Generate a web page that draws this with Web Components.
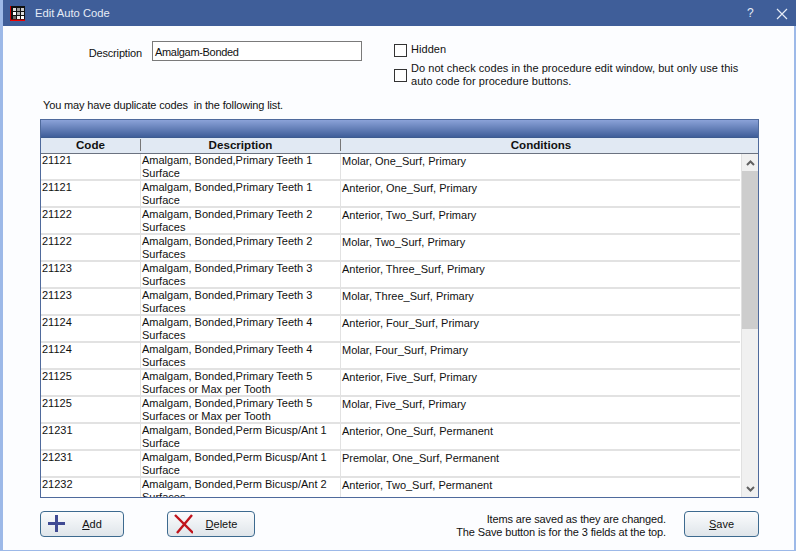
<!DOCTYPE html>
<html><head><meta charset="utf-8"><style>
html,body{margin:0;padding:0;background:#fcfdff}
body{font:11px/13px "Liberation Sans",sans-serif;color:#111}
</style></head><body>
<template id="t-win"><style>
:host{display:flex;flex-direction:column;width:796px;height:551px;box-sizing:border-box;border:solid #9db9e8;border-width:0 2px 1px 3px;background:#fcfdff}
.bar{height:26px;flex:none;margin:0 -2px 0 0;background:#3f5e99;color:#e6ecf6;display:flex;align-items:center;font-size:11.2px}
.ic{margin:0 10px 0 7px;display:flex}
.t{flex:1;margin-top:1px}
.q{width:13px;margin-right:16px;font-size:12px}
.x{margin-right:8px;display:flex;margin-top:2px}
.body{flex:1;min-height:0;display:flex;flex-direction:column}
</style><div class="bar"><span class="ic"><slot name="icon"></slot></span><span class="t"><slot name="title"></slot></span><span class="q">?</span><span class="x"><svg width="12" height="12" viewBox="0 0 12 12"><path d="M1 1L11 11M11 1L1 11" stroke="#e6ecf6" stroke-width="1.2" fill="none"/></svg></span></div><div class="body"><slot></slot></div></template>

<template id="t-field"><style>
:host{display:flex;align-items:flex-start}
.l{width:139px;text-align:right;padding-top:6px;flex:none;box-sizing:border-box;letter-spacing:-.15px}
.i{margin-left:10px;width:210px;height:20px;box-sizing:border-box;border:1px solid #7a7a7a;background:#fff;padding:4px 0 0 2px;white-space:nowrap;letter-spacing:-.32px}
</style><span class="l"><slot name="label"></slot></span><span class="i"><slot></slot></span></template>

<template id="t-check"><style>
:host{display:flex;align-items:center;gap:4px}
.b{width:13px;height:13px;box-sizing:border-box;border:1px solid #333;background:#fff;flex:none;margin-top:1px}
</style><span class="b"></span><span><slot></slot></span></template>

<template id="t-grid"><style>
:host{display:flex;flex-direction:column;height:379px;margin:0 35px 0 37px;box-sizing:border-box;border:1px solid #4f6a9c;flex:none;background:#fff;overflow:hidden}
.cap{height:18px;flex:none;background:linear-gradient(#8ba2d8,#3f5e99);border-bottom:1px solid #3d5b8f;box-sizing:border-box}
.hdr{height:16px;flex:none;display:grid;grid-template-columns:100px 200px 400px;background:#e1e9f3;border-bottom:1px solid #6b7280;box-sizing:border-box;font-weight:bold;font-size:11.6px;text-align:center}
.hdr span{border-right:1px solid #777;height:12px;margin-top:1px;line-height:12px}
.hdr span:last-child{border:0}
.main{flex:1;display:flex;min-height:0}
.rows{flex:1;overflow:hidden;min-width:0}
.sb{width:17px;flex:none;background:#f0f0f0;display:flex;flex-direction:column;align-items:center;margin-left:1px;border-left:1px solid #e0e0e0;box-sizing:border-box}
.a{height:17px;flex:none;display:flex;align-items:center;justify-content:center;width:100%}
.sp{flex:1;width:100%;min-height:0}
.th{height:158px;background:#cdcdcd;width:100%}
</style><div class="cap"></div><div class="hdr"><span>Code</span><span>Description</span><span>Conditions</span></div><div class="main"><div class="rows"><slot></slot></div><div class="sb"><div class="a"><svg width="9" height="6" viewBox="0 0 9 6"><path d="M1 5L4.5 1.5L8 5" stroke="#606060" stroke-width="2" fill="none"/></svg></div><div class="sp"><div class="th"></div></div><div class="a"><svg width="9" height="6" viewBox="0 0 9 6"><path d="M1 1L4.5 4.5L8 1" stroke="#606060" stroke-width="2" fill="none"/></svg></div></div></div></template>

<template id="t-row"><style>
:host{display:grid;grid-template-columns:100px 200px 1fr;height:27px;box-sizing:border-box;border-bottom:2px solid #e2e2e2}
.c{padding:0 0 0 1px;border-right:1px solid #e2e2e2;box-sizing:border-box;line-height:12.5px;height:25px}
.c:last-child{border:0;padding-top:1px}
</style><div class="c" id="a"></div><div class="c" id="b"></div><div class="c" id="d"></div></template>

<template id="t-btn"><style>
:host{display:flex;align-items:center;box-sizing:border-box;height:26px;border:1px solid #3d6a8f;border-radius:4px;background:linear-gradient(#fbfcfd,#dfe5ea);position:relative;flex:none}
.ic{position:absolute;left:5px;top:2px;display:flex}
.t{flex:1;text-align:center;padding-top:1px}
</style><span class="ic"><slot name="icon"></slot></span><span class="t"><slot></slot></span></template>

<template id="t-foot"><style>
:host{display:flex;align-items:flex-start;margin:13px 35px 0 37px;flex:none}
.n{margin-left:auto;margin-right:18px;text-align:right;letter-spacing:-.13px;padding-top:2px}
</style><slot name="left"></slot><span class="n"><slot name="note"></slot></span><slot name="right"></slot></template>

<script>
function def(name,tid,extra){customElements.define(name,class extends HTMLElement{constructor(){super();this.attachShadow({mode:'open'}).appendChild(document.getElementById(tid).content.cloneNode(true));}connectedCallback(){if(extra)extra.call(this);}});}
def('x-window','t-win');def('x-field','t-field');def('x-check','t-check');def('x-grid','t-grid');def('x-btn','t-btn');def('x-foot','t-foot');
def('x-row','t-row',function(){const s=this.shadowRoot;s.getElementById('a').textContent=this.getAttribute('code');s.getElementById('b').textContent=this.getAttribute('desc');s.getElementById('d').textContent=this.getAttribute('cond');});
</script>

<x-window>
<svg slot="icon" width="15" height="15" viewBox="0 0 15 15" style="display:block"><rect width="15" height="15" fill="#111"/><rect y="13.6" width="15" height="1.4" fill="#e00"/><rect width="1" height="15" fill="#c00"/><rect x="3" y="2" width="3" height="3" fill="#ddd"/><rect x="7" y="2" width="3" height="3" fill="#999"/><rect x="11" y="2" width="3" height="3" fill="#ccc"/><rect x="3" y="6" width="3" height="3" fill="#fff"/><rect x="7" y="6" width="3" height="3" fill="#aaa"/><rect x="11" y="6" width="3" height="3" fill="#ddd"/><rect x="3" y="10" width="3" height="3" fill="#666"/><rect x="7" y="10" width="3" height="3" fill="#eee"/><rect x="11" y="10" width="3" height="3" fill="#fff"/></svg>
<span slot="title">Edit Auto Code</span>

<div style="display:flex;height:68px;flex:none;padding-top:15px;box-sizing:border-box">
<x-field style="width:359px"><span slot="label">Description</span>Amalgam-Bonded</x-field>
<div style="margin-left:32px;display:flex;flex-direction:column;gap:5px;padding-top:1px;letter-spacing:.04px">
<x-check style="height:15px">Hidden</x-check>
<x-check style="line-height:12.5px">Do not check codes in the procedure edit window, but only use this<br>auto code for procedure buttons.</x-check>
</div></div>
<div style="height:17px;padding:6px 0 0 40px;box-sizing:border-box;flex:none;line-height:11px;margin-bottom:8px;letter-spacing:-.14px">You may have duplicate codes&nbsp; in the following list.</div>

<x-grid>
<x-row code="21121" desc="Amalgam, Bonded,Primary Teeth 1 Surface" cond="Molar, One_Surf, Primary"></x-row>
<x-row code="21121" desc="Amalgam, Bonded,Primary Teeth 1 Surface" cond="Anterior, One_Surf, Primary"></x-row>
<x-row code="21122" desc="Amalgam, Bonded,Primary Teeth 2 Surfaces" cond="Anterior, Two_Surf, Primary"></x-row>
<x-row code="21122" desc="Amalgam, Bonded,Primary Teeth 2 Surfaces" cond="Molar, Two_Surf, Primary"></x-row>
<x-row code="21123" desc="Amalgam, Bonded,Primary Teeth 3 Surfaces" cond="Anterior, Three_Surf, Primary"></x-row>
<x-row code="21123" desc="Amalgam, Bonded,Primary Teeth 3 Surfaces" cond="Molar, Three_Surf, Primary"></x-row>
<x-row code="21124" desc="Amalgam, Bonded,Primary Teeth 4 Surfaces" cond="Anterior, Four_Surf, Primary"></x-row>
<x-row code="21124" desc="Amalgam, Bonded,Primary Teeth 4 Surfaces" cond="Molar, Four_Surf, Primary"></x-row>
<x-row code="21125" desc="Amalgam, Bonded,Primary Teeth 5 Surfaces or Max per Tooth" cond="Anterior, Five_Surf, Primary"></x-row>
<x-row code="21125" desc="Amalgam, Bonded,Primary Teeth 5 Surfaces or Max per Tooth" cond="Molar, Five_Surf, Primary"></x-row>
<x-row code="21231" desc="Amalgam, Bonded,Perm Bicusp/Ant 1 Surface" cond="Anterior, One_Surf, Permanent"></x-row>
<x-row code="21231" desc="Amalgam, Bonded,Perm Bicusp/Ant 1 Surface" cond="Premolar, One_Surf, Permanent"></x-row>
<x-row code="21232" desc="Amalgam, Bonded,Perm Bicusp/Ant 2 Surfaces" cond="Anterior, Two_Surf, Permanent"></x-row>
</x-grid>

<x-foot>
<div slot="left" style="display:flex;gap:43px">
<x-btn style="width:84px"><svg slot="icon" width="20" height="20" viewBox="0 0 20 20"><path d="M9 1h3v7h7v3h-7v7H9v-7H2V8h7z" fill="#3f4a93"/></svg><span style="padding-left:20px"><u>A</u>dd</span></x-btn>
<x-btn style="width:88px"><svg slot="icon" width="20" height="20" viewBox="0 0 20 20"><path d="M2 1L20 19M19 1L4 19" stroke="#c0141c" stroke-width="2.4" fill="none"/></svg><span style="padding-left:21px"><u>D</u>elete</span></x-btn>
</div>
<span slot="note">Items are saved as they are changed.<br>The Save button is for the 3 fields at the top.</span>
<x-btn slot="right" style="width:75px"><span><u>S</u>ave</span></x-btn>
</x-foot>
</x-window>
</body></html>
